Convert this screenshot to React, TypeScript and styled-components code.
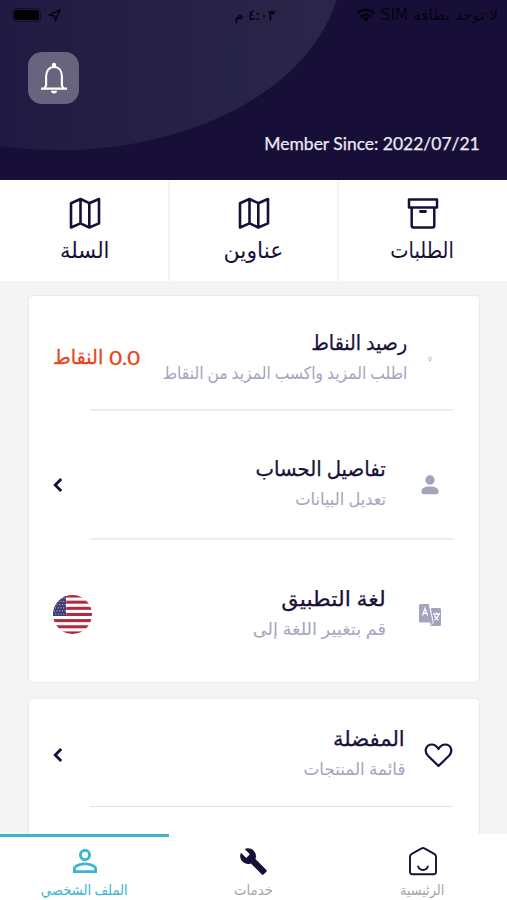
import React from 'react';
import styled, { createGlobalStyle } from 'styled-components';
import { MdBuild, MdPersonOutline } from 'react-icons/md';

const navy = '#180f39';
const muted = '#a3a5bd';
const teal = '#3bb5cd';

const GlobalStyle = createGlobalStyle`
  *, *::before, *::after { box-sizing: border-box; }
  body { margin: 0; background: #f4f4f4; overflow: hidden; }
  svg { display: block; }
`;

const Screen = styled.div`
  height: 900px;
  display: flex;
  flex-direction: column;
  overflow: hidden;
  font-family: Lato, "DejaVu Sans", sans-serif;
  color: ${navy};
`;

const Text = styled.span<{ $stretch?: number; $origin?: string }>`
  display: block;
  width: max-content;
  white-space: nowrap;
  transform: scaleX(${p => p.$stretch ?? 1});
  transform-origin: ${p => p.$origin ?? 'right'} center;
`;

const Header = styled.header`
  position: relative;
  flex: 0 0 180px;
  display: flex;
  flex-direction: column;
  overflow: hidden;
  background: ${navy};
`;

const Glow = styled.div`
  position: absolute;
  left: -222px;
  top: -224px;
  width: 564px;
  height: 374px;
  border-radius: 50%;
  background: linear-gradient(90deg, #211b43 40%, #2a2549 95%);
`;

const StatusBar = styled.div`
  position: relative;
  height: 30px;
  display: grid;
  grid-template-columns: 1fr auto 1fr;
  align-items: center;
  padding: 0 9px 0 12px;
  color: #05030f;
`;

const StatusGroup = styled.div`
  display: flex;
  align-items: center;
  gap: 7px;
`;

const Battery = styled.div`
  width: 29px;
  height: 14px;
  padding: 1px;
  border: 1px solid #140d2c;
  border-radius: 4px;
  &::before {
    content: '';
    display: block;
    height: 100%;
    border-radius: 2px;
    background: #000;
  }
`;

const StatusText = styled(Text)`
  font: 15px/20px "DejaVu Sans", sans-serif;
`;

const Clock = styled(Text)`
  font: 14px/20px "DejaVu Sans", sans-serif;
  -webkit-text-stroke: 0.3px #05030f;
`;

const BellButton = styled.button`
  position: relative;
  width: 51px;
  height: 52px;
  margin: 22px 0 0 28px;
  padding: 0;
  display: grid;
  place-items: center;
  border: 0;
  border-radius: 14px;
  background: #69647d;
`;

const MemberSince = styled(Text)`
  position: relative;
  align-self: flex-end;
  margin: 29px 27px 0 0;
  font-size: 17px;
  line-height: 22px;
  color: #ece9f4;
  -webkit-text-stroke: 0.25px #ece9f4;
`;

const Tabs = styled.nav`
  flex: 0 0 101px;
  display: grid;
  grid-template-columns: repeat(3, 1fr);
  background: #fff;
`;

const Tab = styled.a`
  display: flex;
  flex-direction: column;
  align-items: center;
  padding-top: 17px;
  box-shadow: 1px 0 0 #f4f4f4, inset -1px 0 0 #f4f4f4;
  &:last-child { box-shadow: none; }
`;

const TabLabel = styled(Text)`
  margin-top: 5px;
  font-size: 22px;
  line-height: 32px;
`;

const Content = styled.main`
  flex: 1;
  min-height: 0;
  overflow: hidden;
  display: flex;
  flex-direction: column;
  gap: 15px;
  padding: 14px 27px 0 28px;
`;

const Card = styled.section`
  flex: none;
  padding: 0 26px 0 24px;
  background: #fff;
  border: 1px solid #eaeaea;
  border-radius: 5px;
`;

const Row = styled.div<{ $height: number; $top: number }>`
  height: ${p => p.$height}px;
  padding-top: ${p => p.$top}px;
  display: flex;
  align-items: flex-start;
`;

const Slot = styled.div<{ $width: number; $gap: number }>`
  flex: none;
  width: ${p => p.$width}px;
  height: 60px;
  margin-left: ${p => p.$gap}px;
  display: grid;
  place-items: center;
`;

const Copy = styled.div`
  flex: 1;
  min-width: 0;
`;

const Title = styled(Text)`
  margin-top: -2px;
  margin-bottom: 2px;
  font-size: 20.5px;
  line-height: 30px;
  -webkit-text-stroke: 0.25px ${navy};
`;

const Subtitle = styled(Text)`
  font-size: 17px;
  line-height: 28px;
  color: ${muted};
`;

const End = styled.div`
  flex: none;
  height: 60px;
  display: flex;
  align-items: center;
`;

const Points = styled.div`
  display: flex;
  width: 87px;
  height: 56px;
  padding-bottom: 5px;
  align-items: center;
  justify-content: space-between;
  font-size: 20px;
  color: #e2481d;
  -webkit-text-stroke: 0.3px #e2481d;
`;

const Divider = styled.hr<{ $thin?: boolean }>`
  height: ${p => (p.$thin ? 1 : 2)}px;
  margin: 0 0 0 37px;
  border: 0;
  background: ${p => (p.$thin ? '#e4e4e4' : '#eeeeef')};
`;

const FlagCircle = styled.svg`
  width: 39px;
  height: 39px;
  margin-bottom: 1px;
  border-radius: 50%;
`;

const BottomNav = styled.nav`
  flex: 0 0 66px;
  display: grid;
  grid-template-columns: repeat(3, 1fr);
  background: #fff;
`;

const NavItem = styled.a<{ $active?: boolean }>`
  display: flex;
  flex-direction: column;
  align-items: center;
  border-top: 3px solid ${p => (p.$active ? teal : 'transparent')};
  color: ${p => (p.$active ? teal : navy)};
`;

const NavIcon = styled.div`
  height: 43px;
  padding-top: 5px;
  display: grid;
  place-items: center;
`;

const NavLabel = styled(Text)<{ $active?: boolean }>`
  font-size: 14px;
  line-height: 20px;
  color: ${p => (p.$active ? teal : '#a5a4a9')};
`;

const BellIcon = () => (
  <svg width="28" height="34" viewBox="0 0 28 34" fill="none" stroke="#fff" strokeWidth="2.1">
    <path d="M1 27.600h26M4.400 27.500l1.700-3V15.500c0-5.500 3-9.500 7.900-9.500s7.900 4 7.900 9.500v9l1.700 3" />
    <circle cx="14" cy="4" r="2.200" fill="#fff" stroke="none" />
    <path d="M11 29.800h6a3 2.600 0 0 1-6 0z" fill="#fff" stroke="none" />
  </svg>
);

const MapIcon = () => (
  <svg width="32" height="32" viewBox="0 0 32 32" fill="none" stroke={navy} strokeWidth="2.6" strokeLinejoin="round">
    <path d="M2 6.200 11.500 2l8.800 4.200L30 2v24.400L20.300 30.500l-8.800-4.100L2 30.500zM11.500 2v24.400M20.300 6.200v24.300" />
  </svg>
);

const BoxIcon = () => (
  <svg width="32" height="32" viewBox="0 0 32 32" fill="none" stroke={navy} strokeWidth="2.5" strokeLinejoin="round">
    <path d="M2 2.500h28v8H2zM4.700 10.500h22.600v18a2 2 0 0 1-2 2H6.700a2 2 0 0 1-2-2z" />
    <path d="M13.500 14.500h5" strokeWidth="2.800" strokeLinecap="round" />
  </svg>
);

const WifiIcon = () => (
  <svg width="20" height="14" viewBox="0 0 20 14" fill="none" stroke="#05030f" strokeWidth="2.800">
    <path d="M1.500 5.500a12 12 0 0 1 17 0M4.800 8.800a7.400 7.400 0 0 1 10.400 0" />
    <path d="m6.900 10.500 3.100 3.200 3.100-3.200a4.500 4.500 0 0 0-6.200 0z" fill="#05030f" stroke="none" />
  </svg>
);

const LocationIcon = () => (
  <svg width="13" height="13" viewBox="0 0 13 13" fill="none" stroke="#05030f" strokeWidth="1.400" strokeLinejoin="round">
    <path d="M1 6.200 12 1 7.200 12 6.300 6.700z" />
  </svg>
);

const PersonIcon = () => (
  <svg width="18" height="20" viewBox="0 0 18 20" fill={muted}>
    <circle cx="9" cy="5" r="4.700" />
    <path d="M.4 16.500c0-3 3-5 8.600-5s8.600 2 8.600 5c0 2-.8 2.700-2.300 2.700H2.700C1.200 19.200.4 18.500.4 16.500z" />
  </svg>
);

const TranslateIcon = () => (
  <svg width="24" height="24" viewBox="0 0 24 24">
    <path d="M13 5h8.500a1.500 1.500 0 0 1 1.500 1.500v15a1.500 1.500 0 0 1-1.500 1.500H12z" fill={muted} />
    <path d="M2.500 1h8.300l4.200 18.500H2.500A1.500 1.500 0 0 1 1 18V2.500A1.500 1.500 0 0 1 2.500 1z" fill={muted} />
    <path d="m11.400 1 3.800 18.500-3 3" fill="none" stroke="#fff" strokeWidth="1" />
    <path d="m4.500 12.500 2.500-7 2.500 7M5.300 10.300h3.400M15 11h7M18.500 9.500V11M21 11c-.7 3-2.600 4.700-4.500 6M16.500 12.500c.8 2 2.500 3.700 4 4.500" fill="none" stroke="#fff" strokeWidth="1.300" />
  </svg>
);

const PinIcon = () => (
  <svg width="6" height="7" viewBox="0 0 6 7" fill="none" stroke="#bfc0cc">
    <path d="M1.500 2.500a1.500 1.500 0 0 1 3 0L3 5.500z" />
  </svg>
);

const HeartIcon = () => (
  <svg width="29" height="26" viewBox="0 0 29 26" fill="none" stroke={navy} strokeWidth="2.200" strokeLinejoin="round">
    <path d="M14.500 24 4 13.700C-.5 9 2.200 2.500 7.800 2.500c3 0 5 1.700 6.700 4.500 1.700-2.800 3.700-4.500 6.700-4.500 5.600 0 8.300 6.500 3.800 11.200z" />
  </svg>
);

const Chevron = () => (
  <svg width="10" height="16" viewBox="0 0 10 16" fill="none" stroke={navy} strokeWidth="2.800">
    <path d="M8.200 2 2.200 8l6 6" />
  </svg>
);

const HomeIcon = () => (
  <svg width="30" height="30" viewBox="0 0 30 30" fill="none" stroke={navy} strokeWidth="1.900" strokeLinejoin="round" strokeLinecap="round">
    <path d="M2 10.800c0-1.600.5-2.300 1.800-3L13.600 2.400a3 3 0 0 1 2.800 0l9.800 5.400c1.300.7 1.800 1.400 1.800 3v15.200a2.200 2.200 0 0 1-2.200 2.200H4.200A2.200 2.200 0 0 1 2 26z" />
    <path d="M10.200 20.500c1.400 4.600 8.200 4.600 9.600 0" />
  </svg>
);

const stars = Array.from({ length: 30 }, (_, i) => ({
  x: 1.3 + (i % 5) * 2.700 + (Math.floor(i / 5) % 2) * 1.300,
  y: 3.500 + Math.floor(i / 5) * 3.100,
}));

const Flag = () => (
  <FlagCircle viewBox="0 0 39 39">
    <rect width="39" height="39" fill="#fff" />
    {[0, 1, 2, 3, 4, 5, 6].map(i => (
      <rect key={i} y={-0.500 + i * 6.150} width="39" height="3.050" fill="#b02a40" />
    ))}
    <rect width="13" height="21" fill="#3f3d70" />
    {stars.map((s, i) => (
      <circle key={i} cx={s.x} cy={s.y} r="0.600" fill="#c3c3d8" />
    ))}
  </FlagCircle>
);

export default function App() {
  return (
    <Screen>
      <GlobalStyle />
      <Header>
        <Glow />
        <StatusBar>
          <StatusGroup>
            <Battery />
            <LocationIcon />
          </StatusGroup>
          <Clock dir="rtl">٤:٠٣ م</Clock>
          <StatusGroup dir="rtl">
            <StatusText $stretch={1.02}>لا توجد بطاقة SIM</StatusText>
            <WifiIcon />
          </StatusGroup>
        </StatusBar>
        <BellButton aria-label="الإشعارات"><BellIcon /></BellButton>
        <MemberSince $stretch={1.027}>Member Since: 2022/07/21</MemberSince>
      </Header>

      <Tabs>
        <Tab><MapIcon /><TabLabel dir="rtl" $origin="center" $stretch={0.96}>السلة</TabLabel></Tab>
        <Tab><MapIcon /><TabLabel dir="rtl" $origin="center" $stretch={1}>عناوين</TabLabel></Tab>
        <Tab><BoxIcon /><TabLabel dir="rtl" $origin="center" $stretch={0.88}>الطلبات</TabLabel></Tab>
      </Tabs>

      <Content dir="rtl">
        <Card>
          <Row $height={113} $top={33}>
            <Slot $width={46} $gap={0}><PinIcon /></Slot>
            <Copy>
              <Title $stretch={0.93}>رصيد النقاط</Title>
              <Subtitle $stretch={0.915}>اطلب المزيد واكسب المزيد من النقاط</Subtitle>
            </Copy>
            <End>
              <Points>
                <Text $stretch={1.1}>0.0</Text>
                <Text $origin="left" $stretch={0.96}>النقاط</Text>
              </Points>
            </End>
          </Row>
          <Divider />
          <Row $height={127} $top={44}>
            <Slot $width={46} $gap={21}><PersonIcon /></Slot>
            <Copy>
              <Title $stretch={0.96}>تفاصيل الحساب</Title>
              <Subtitle $stretch={0.955}>تعديل البيانات</Subtitle>
            </Copy>
            <End><Chevron /></End>
          </Row>
          <Divider />
          <Row $height={142} $top={45}>
            <Slot $width={46} $gap={21}><TranslateIcon /></Slot>
            <Copy>
              <Title $stretch={1.08}>لغة التطبيق</Title>
              <Subtitle $stretch={1.05}>قم بتغيير اللغة إلى</Subtitle>
            </Copy>
            <End><Flag /></End>
          </Row>
        </Card>

        <Card>
          <Row $height={107} $top={26}>
            <Slot $width={27} $gap={21}><HeartIcon /></Slot>
            <Copy>
              <Title $stretch={1.03}>المفضلة</Title>
              <Subtitle $stretch={0.985}>قائمة المنتجات</Subtitle>
            </Copy>
            <End><Chevron /></End>
          </Row>
          <Divider $thin />
          <Row $height={107} $top={26} />
        </Card>
      </Content>

      <BottomNav>
        <NavItem $active>
          <NavIcon><MdPersonOutline size={36} /></NavIcon>
          <NavLabel dir="rtl" $active $origin="center" $stretch={0.94}>الملف الشخصي</NavLabel>
        </NavItem>
        <NavItem>
          <NavIcon><MdBuild size={29} /></NavIcon>
          <NavLabel dir="rtl" $origin="center" $stretch={0.95}>خدمات</NavLabel>
        </NavItem>
        <NavItem>
          <NavIcon><HomeIcon /></NavIcon>
          <NavLabel dir="rtl" $origin="center" $stretch={0.92}>الرئيسية</NavLabel>
        </NavItem>
      </BottomNav>
    </Screen>
  );
}
